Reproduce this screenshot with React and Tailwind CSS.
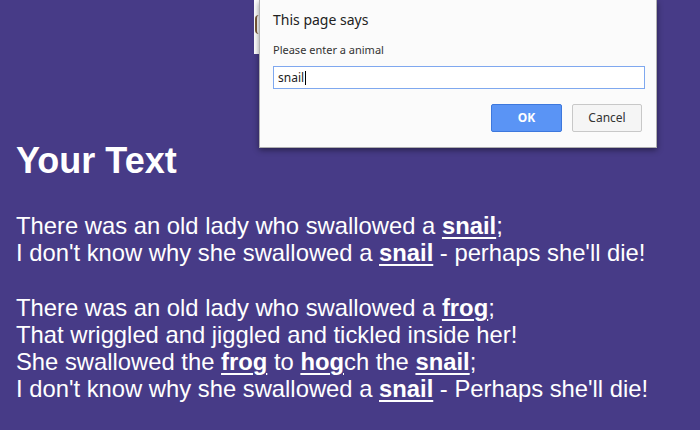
import React from "react";

const B = ({ children }) => (
  <span className="font-bold underline decoration-2 underline-offset-[3px]">{children}</span>
);

export default function App() {
  return (
    <div className="relative w-full h-[430px] overflow-hidden bg-[#473b87] text-white [font-family:'Liberation_Sans',Arial,sans-serif]">
      <div className="pl-4 pt-[141px]">
        <h1 className="text-[36px] leading-[40px] font-bold">Your Text</h1>
        <p className="mt-[31px] text-[23.8px] leading-[27px]">
          There was an old lady who swallowed a <B>snail</B>;<br />
          I don't know why she swallowed a <B>snail</B> - perhaps she'll die!
        </p>
        <p className="mt-[28px] text-[23.8px] leading-[27px]">
          There was an old lady who swallowed a <B>frog</B>;<br />
          That wriggled and jiggled and tickled inside her!<br />
          She swallowed the <B>frog</B> to <B>hog</B>ch the <B>snail</B>;<br />
          I don't know why she swallowed a <B>snail</B> - Perhaps she'll die!
        </p>
      </div>

      {/* partially hidden element behind dialog */}
      <div className="absolute left-[254px] top-0 w-[6px] h-[54px] bg-white">
        <div className="absolute left-[1px] top-[15px] w-[4px] h-[19px] rounded-l-full border-l-2 border-[#7a5a3a]" />
      </div>

      {/* prompt dialog */}
      <div className="absolute left-[259px] top-0 w-[398px] h-[148px] bg-[#fbfbfb] border border-t-0 border-[#b0b0b0] shadow-[0_2px_6px_rgba(0,0,0,0.45)] flex flex-col px-[13px] pt-[10px] [font-family:'Noto_Sans',sans-serif] text-[#222]">
        <div className="text-[14px] leading-[20px]">This page says</div>
        <div className="mt-[12px] text-[11px] leading-[16px] text-[#333]">Please enter a animal</div>
        <div className="mt-[8px] h-[23px] w-[372px] border border-[#7fa8ef] bg-white flex items-center pl-[4px] text-[12px] text-[#222]">
          snail<span className="ml-[1px] inline-block w-px h-[14px] bg-black" />
        </div>
        <div className="mt-[15px] flex justify-end gap-[10px] pr-[1px]">
          <div className="w-[71px] h-[28px] rounded-[2px] bg-[#5a94f5] border border-[#3d78dd] text-white font-bold text-[12px] flex items-center justify-center">OK</div>
          <div className="w-[70px] h-[28px] rounded-[2px] bg-[#f5f5f5] border border-[#c8c8c8] text-[#333] text-[12px] flex items-center justify-center">Cancel</div>
        </div>
      </div>
    </div>
  );
}
